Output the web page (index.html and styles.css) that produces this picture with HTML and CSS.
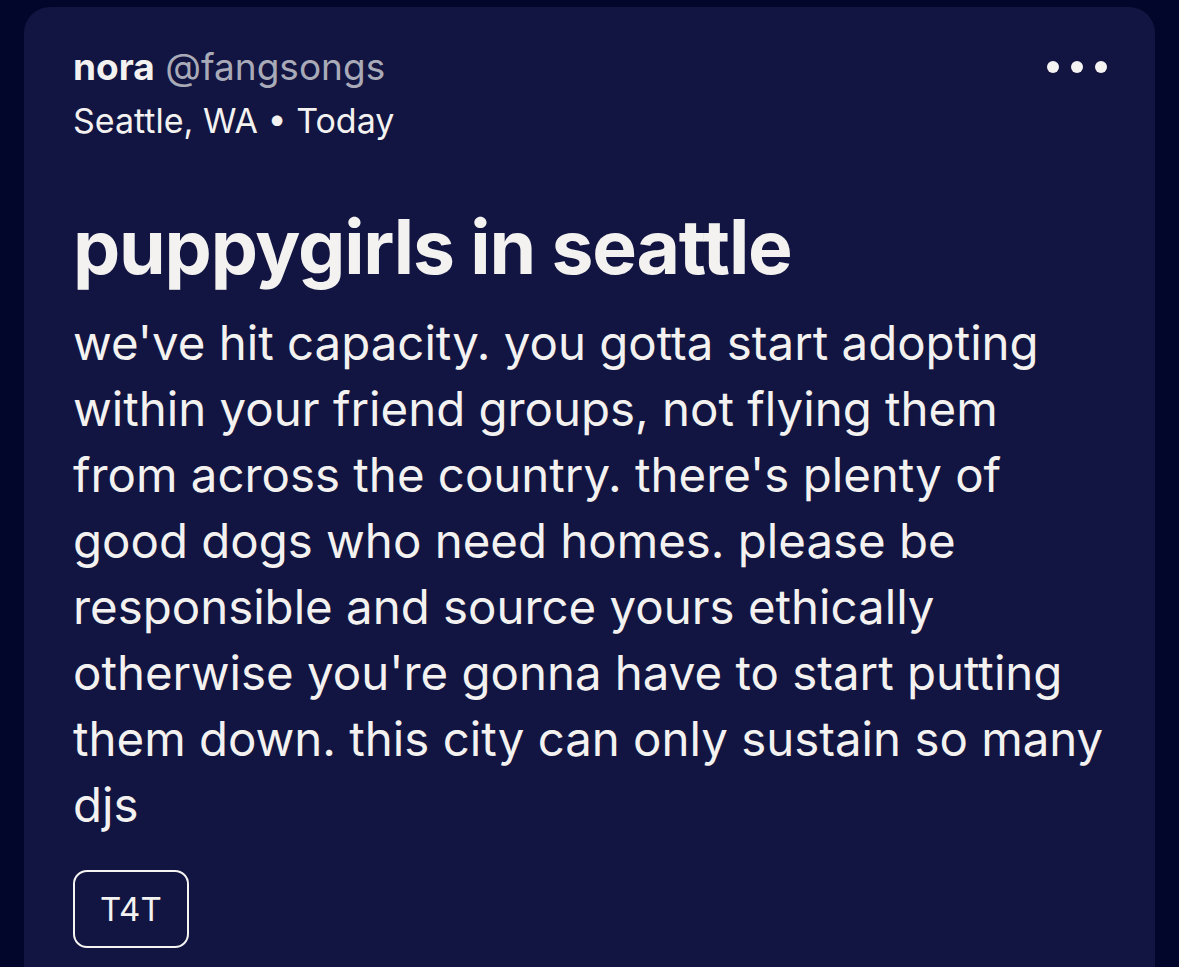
FILE: index.html
```html
<!DOCTYPE html>
<html>
<head>
<meta charset="utf-8">
<link rel="stylesheet" href="styles.css">
</head>
<body>
<div class="card">
  <div class="head">
    <div class="meta">
      <div class="who"><span class="name">nora</span> <span class="handle">@fangsongs</span></div>
      <div class="where">Seattle, WA • Today</div>
    </div>
    <div class="more"><span></span><span></span><span></span></div>
  </div>
  <h1 class="title">puppygirls in seattle</h1>
  <p class="body">we've hit capacity. you gotta start adopting<br>within your friend groups, not flying them<br>from across the country. there's plenty of<br>good dogs who need homes. please be<br>responsible and source yours ethically<br>otherwise you're gonna have to start putting<br>them down. this city can only sustain so many<br>djs</p>
  <div class="tags"><span class="tag">T4T</span></div>
</div>
</body>
</html>
```
FILE: styles.css
```css
html, body { margin: 0; padding: 0; }
body {
  background: #03062b;
  width: 1179px;
  height: 967px;
  overflow: hidden;
  font-family: "Inter", "Noto Sans", sans-serif;
  color: #f3f2f0;
}
.card {
  margin: 7px 0 0 24px;
  width: 1131px;
  height: 1000px;
  background: #121541;
  border-radius: 26px;
  padding: 40px 48px 0 49px;
  box-sizing: border-box;
}
.head { display: flex; justify-content: space-between; align-items: flex-start; }
.who { font-size: 37px; line-height: 40px; }
.name { font-weight: 700; }
.handle { color: #a9aab8; }
.where { font-size: 34px; line-height: 40px; margin-top: 14px; }
.more { display: flex; gap: 12px; margin-top: 14px; }
.more span { width: 12px; height: 12px; border-radius: 50%; background: #f5f4f2; display: block; }
.title {
  font-size: 75px;
  font-weight: 700;
  letter-spacing: -1.2px;
  margin: 66px 0 0 0;
  line-height: 80px;
}
.body {
  font-size: 47.4px;
  line-height: 66px;
  margin: 23px 0 0 0;
  width: 1070px;
  white-space: nowrap;
}
.tags { margin-top: 32px; }
.tag {
  display: inline-block;
  border: 2.5px solid #f5f4f2;
  border-radius: 14px;
  font-size: 33px;
  padding: 18px 25px;
  line-height: 38px;
}
```
